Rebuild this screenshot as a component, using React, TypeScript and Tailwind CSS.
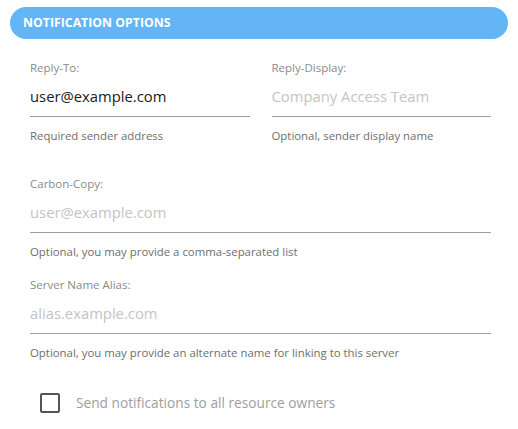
import React from "react";

function Field({
  label,
  value,
  placeholder,
  helper,
}: {
  label: string;
  value?: string;
  placeholder?: string;
  helper: string;
}) {
  return (
    <div className="flex flex-col">
      <div className="h-[16px] text-[11.5px] leading-[16px] text-[#8a8a8a]">{label}</div>
      <div className="h-[41px] border-b border-[#9e9e9e] flex items-center pt-[1px]">
        {value ? (
          <span className="text-[14.8px] text-[#1a1a1a]">{value}</span>
        ) : (
          <span className="text-[14.8px] text-[#c4c4c4]">{placeholder}</span>
        )}
      </div>
      <div className="mt-[11px] h-[16px] text-[11.4px] leading-[16px] text-[#6e6e6e]">{helper}</div>
    </div>
  );
}

export default function App() {
  return (
    <div
      className="w-[518px] h-[429px] bg-white overflow-hidden"
      style={{ fontFamily: '"Open Sans", "Noto Sans", sans-serif' }}
    >
      <div className="pt-[7px] px-[10px]">
        <div className="h-[32px] rounded-full bg-[#64b5f6] flex items-center pl-[13px]">
          <span className="text-white font-bold text-[12.3px]">NOTIFICATION OPTIONS</span>
        </div>
      </div>
      <div className="pl-[30px] pr-[27px]">
        <div className="mt-[21px] grid grid-cols-2 gap-x-[22px]">
          <Field label="Reply-To:" value="user@example.com" helper="Required sender address" />
          <Field label="Reply-Display:" placeholder="Company Access Team" helper="Optional, sender display name" />
        </div>
        <div className="mt-[32px]">
          <Field
            label="Carbon-Copy:"
            placeholder="user@example.com"
            helper="Optional, you may provide a comma-separated list"
          />
        </div>
        <div className="mt-[17px]">
          <Field
            label="Server Name Alias:"
            placeholder="alias.example.com"
            helper="Optional, you may provide an alternate name for linking to this server"
          />
        </div>
        <div className="mt-[32px] pl-[10px] flex items-center gap-[16px]">
          <div className="w-[20px] h-[20px] border-2 border-[#555555] rounded-[2px]" />
          <span className="text-[13.7px] text-[#9e9e9e]">Send notifications to all resource owners</span>
        </div>
      </div>
    </div>
  );
}
